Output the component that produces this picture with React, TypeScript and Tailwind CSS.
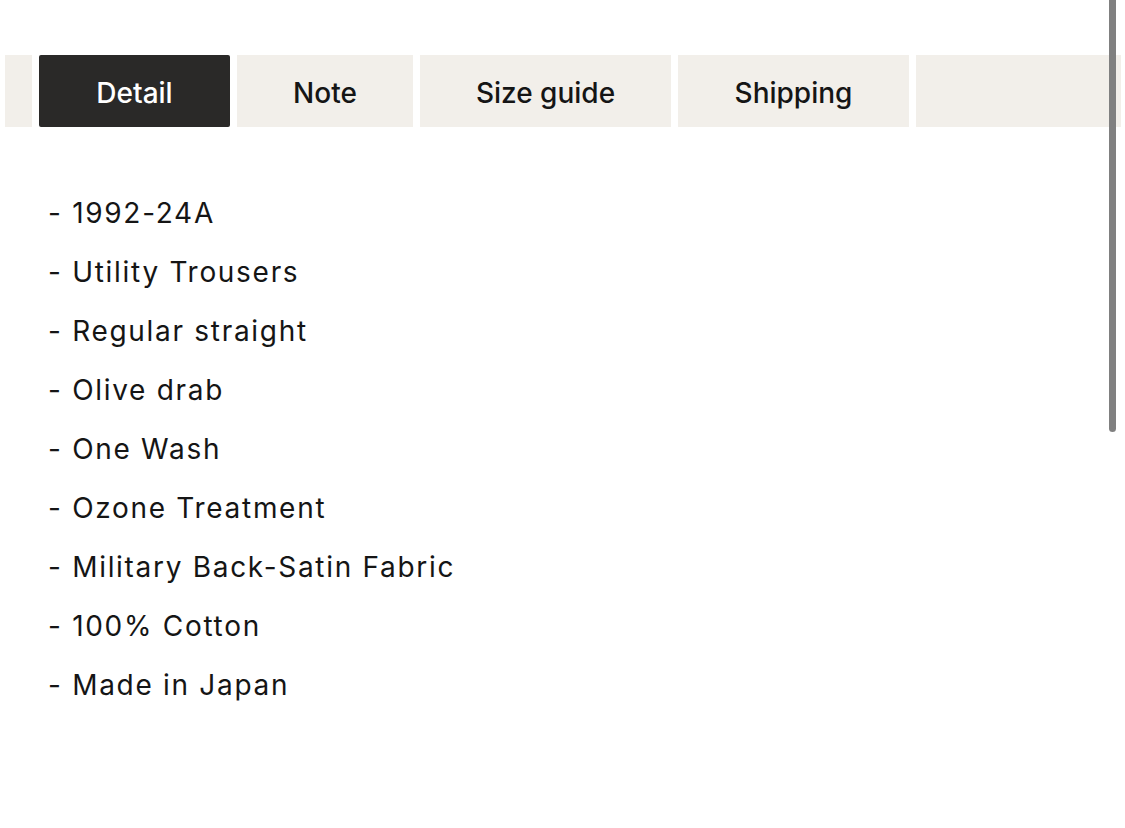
import React from 'react';

const tabs = [
  { label: '', w: 'w-[27px]' },
  { label: 'Detail', w: 'w-[191px]', active: true },
  { label: 'Note', w: 'w-[176px]' },
  { label: 'Size guide', w: 'w-[251px]' },
  { label: 'Shipping', w: 'w-[231px]' },
  { label: '', w: 'w-[205px]' },
];

const details = [
  '1992-24A',
  'Utility Trousers',
  'Regular straight',
  'Olive drab',
  'One Wash',
  'Ozone Treatment',
  'Military Back-Satin Fabric',
  '100% Cotton',
  'Made in Japan',
];

export default function App() {
  return (
    <div className="relative h-[828px] w-[1125px] overflow-hidden bg-white font-['Inter','Liberation_Sans',sans-serif] text-[#151515]">
      {/* tab strip */}
      <div className="flex gap-[7px] pl-[5px] pt-[55px]">
        {tabs.map((t, i) => (
          <div
            key={i}
            className={`flex h-[72px] shrink-0 items-center justify-center pt-[3px] text-[28px] font-medium ${t.w} ${
              t.active ? 'rounded-[2px] bg-[#2a2928] text-white' : 'bg-[#f2efea] text-[#151515]'
            }`}
          >
            {t.label}
          </div>
        ))}
      </div>

      <ul className="mt-[57px] pl-[48px]">
        {details.map((d) => (
          <li key={d} className="text-[28px] leading-[59px] tracking-[1.7px]">
            - {d}
          </li>
        ))}
      </ul>

      {/* scrollbar thumb */}
      <div className="absolute right-[9px] top-[-6px] h-[438px] w-[7px] rounded-full bg-[#808080]" />
    </div>
  );
}
